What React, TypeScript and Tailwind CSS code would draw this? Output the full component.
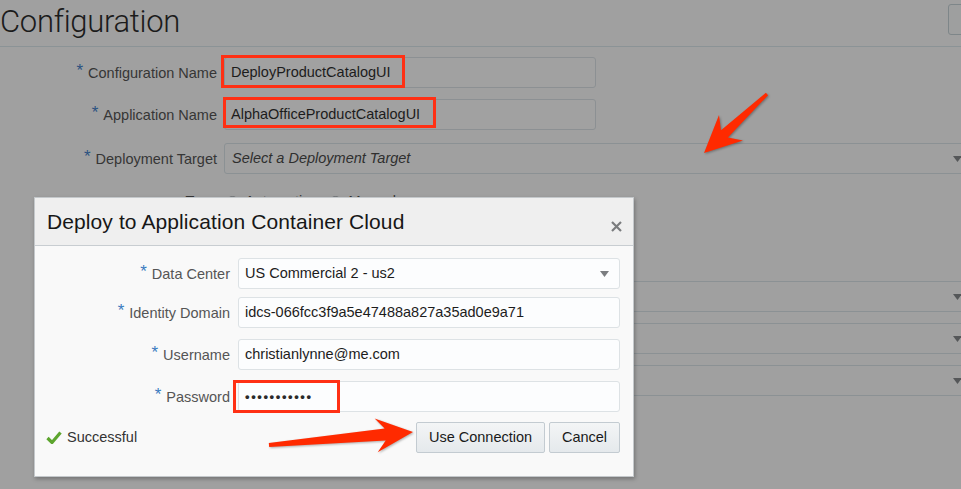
import React from "react";

type P = [number, number];

function arrowPoints(
  tail: P,
  tip: P,
  headLen: number,
  headHalf: number,
  tailHalf: number,
  neckHalf: number,
  notch: number
): string {
  const dx = tip[0] - tail[0];
  const dy = tip[1] - tail[1];
  const len = Math.hypot(dx, dy);
  const ux = dx / len;
  const uy = dy / len;
  const px = -uy;
  const py = ux;
  const neckC: P = [tip[0] - ux * (headLen - notch), tip[1] - uy * (headLen - notch)];
  const barbC: P = [tip[0] - ux * headLen, tip[1] - uy * headLen];
  const pts: P[] = [
    [tail[0] + px * tailHalf, tail[1] + py * tailHalf],
    [neckC[0] + px * neckHalf, neckC[1] + py * neckHalf],
    [barbC[0] + px * headHalf, barbC[1] + py * headHalf],
    tip,
    [barbC[0] - px * headHalf, barbC[1] - py * headHalf],
    [neckC[0] - px * neckHalf, neckC[1] - py * neckHalf],
    [tail[0] - px * tailHalf, tail[1] - py * tailHalf],
  ];
  return pts.map((p) => `${p[0].toFixed(1)},${p[1].toFixed(1)}`).join(" ");
}

function BgLabel({ text, w = "w-[218px]" }: { text: string; w?: string }) {
  return (
    <div className={`${w} shrink-0 flex items-center justify-end pr-[1px] pt-[2px]`}>
      <span className="text-[17px] leading-none text-[#2b5280] mr-[5px] mb-[7px]">*</span>
      <span className="text-[14.5px] text-[#363636]">{text}</span>
    </div>
  );
}

function BgArrow() {
  return (
    <svg width="9" height="6" viewBox="0 0 9 6" className="shrink-0">
      <path d="M0 0 H9 L4.5 6 Z" fill="#555759" />
    </svg>
  );
}

function BgSelect({ placeholder }: { placeholder?: string }) {
  return (
    <div className="flex-1 -mr-[14px] h-full flex items-center justify-between pl-[7px] pr-[12px] border border-[#8b9194] rounded-l-[3px] bg-[#a0a0a0]">
      <span className="text-[14.5px] italic text-[#2f2f2f]">{placeholder ?? ""}</span>
      <BgArrow />
    </div>
  );
}

function DlgLabel({ text }: { text: string }) {
  return (
    <div className="w-[195px] shrink-0 flex items-center justify-end pt-[2px]">
      <span className="text-[17px] leading-none text-[#3a7bc0] mr-[5px] mb-[7px]">*</span>
      <span className="text-[14.5px] text-[#555555]">{text}</span>
    </div>
  );
}

function DlgInput({ children, arrow }: { children: React.ReactNode; arrow?: boolean }) {
  return (
    <div className="ml-[8px] flex-1 h-full flex items-center justify-between pl-[6px] pr-[10px] border border-[#dde2e5] rounded-[3px] bg-[#fcfdfe]">
      <span className="text-[14.5px] text-[#1c1c1c] whitespace-nowrap">{children}</span>
      {arrow && (
        <svg width="9" height="6" viewBox="0 0 9 6">
          <path d="M0 0 H9 L4.5 6 Z" fill="#7b7d80" />
        </svg>
      )}
    </div>
  );
}

export default function App() {
  const topArrow = arrowPoints([767, 94], [704, 153], 37, 17.5, 1.6, 5, 9);
  const bottomArrow = arrowPoints([269, 445], [413, 432], 37, 17, 2, 6, 9);

  return (
    <div className="relative w-[961px] h-[489px] overflow-hidden bg-[#a0a0a0] font-['Liberation_Sans',Arial,sans-serif]">
      {/* Page header */}
      <div className="h-[47px] flex items-start justify-between border-b border-[#8b9396]">
        <h1 className="font-['Roboto',sans-serif] font-light text-[31px] leading-none pt-[6px] text-[#1b1b1b] tracking-[-0.3px]">
          Configuration
        </h1>
        <div className="mt-[4px] -mr-[10px] w-[23px] h-[31px] border border-[#7e8689] rounded-[3px] bg-[#9e9f9f]" />
      </div>

      {/* Background form */}
      <div className="flex flex-col pt-[10px]">
        <div className="flex items-center h-[31px]">
          <BgLabel text="Configuration Name" />
          <div className="ml-[6px] w-[372px] h-full flex items-center pl-[6px] border border-[#8c9093] rounded-[3px] bg-[#a1a1a1]">
            <span className="text-[14.5px] text-[#1c1c1c]">DeployProductCatalogUI</span>
          </div>
        </div>
        <div className="flex items-center h-[31px] mt-[11px]">
          <BgLabel text="Application Name" />
          <div className="ml-[6px] w-[372px] h-full flex items-center pl-[6px] border border-[#8c9093] rounded-[3px] bg-[#a1a1a1]">
            <span className="text-[14.5px] text-[#1c1c1c]">AlphaOfficeProductCatalogUI</span>
          </div>
        </div>
        <div className="flex items-center h-[31px] mt-[13px]">
          <BgLabel text="Deployment Target" />
          <div className="ml-[6px] flex-1 h-full flex">
            <BgSelect placeholder="Select a Deployment Target" />
          </div>
        </div>
        <div className="flex items-center h-[28px] mt-[14px]">
          <div className="w-[218px] shrink-0 flex justify-end pr-[1px]">
            <span className="text-[14.5px] text-[#363636]">Type</span>
          </div>
          <div className="ml-[8px] flex items-center gap-[6px]">
            <span className="w-[13px] h-[13px] rounded-full border border-[#6f7376] bg-[#a6a6a6]" />
            <span className="text-[14.5px] text-[#363636]">Automatic</span>
            <span className="ml-[14px] w-[13px] h-[13px] rounded-full border border-[#6f7376] bg-[#a6a6a6]" />
            <span className="text-[14.5px] text-[#363636]">Manual</span>
          </div>
        </div>
        <div className="flex items-center h-[31px] mt-[65px]">
          <div className="w-[218px] shrink-0" />
          <div className="ml-[6px] flex-1 h-full flex">
            <BgSelect />
          </div>
        </div>
        <div className="flex items-center h-[31px] mt-[11px]">
          <div className="w-[218px] shrink-0" />
          <div className="ml-[6px] flex-1 h-full flex">
            <BgSelect />
          </div>
        </div>
        <div className="flex items-center h-[31px] mt-[11px]">
          <div className="w-[218px] shrink-0" />
          <div className="ml-[6px] flex-1 h-full flex">
            <BgSelect />
          </div>
        </div>
      </div>

      {/* Dialog */}
      <div className="absolute left-[34px] top-[197px] w-[600px] h-[280px] flex flex-col border border-[#c4c8cb] bg-[#f9f9f9] shadow-[1px_2px_4px_rgba(0,0,0,0.28)]">
        <div className="h-[48px] shrink-0 flex items-center justify-between pl-[12px] pr-[11px] bg-[#efefef] border-b border-[#c8cdd1]">
          <span className="text-[21px] text-[#171717] tracking-[0.1px] pt-[1px]">Deploy to Application Container Cloud</span>
          <svg width="11" height="11" viewBox="0 0 11 11" className="mt-[10px]">
            <path d="M1 1 L10 10 M10 1 L1 10" stroke="#7a7c7e" strokeWidth="2.2" />
          </svg>
        </div>
        <div className="flex flex-col pt-[12px] pr-[13px]">
          <div className="flex items-center h-[31px]">
            <DlgLabel text="Data Center" />
            <DlgInput arrow>US Commercial 2 - us2</DlgInput>
          </div>
          <div className="flex items-center h-[31px] mt-[8px]">
            <DlgLabel text="Identity Domain" />
            <DlgInput>idcs-066fcc3f9a5e47488a827a35ad0e9a71</DlgInput>
          </div>
          <div className="flex items-center h-[31px] mt-[11px]">
            <DlgLabel text="Username" />
            <DlgInput>christianlynne@me.com</DlgInput>
          </div>
          <div className="flex items-center h-[31px] mt-[11px]">
            <DlgLabel text="Password" />
            <DlgInput>
              <span className="text-[13px] tracking-[1.6px] font-bold text-[#2a2a2a]">•••••••••••</span>
            </DlgInput>
          </div>
          <div className="flex items-center justify-between h-[31px] mt-[10px] pl-[11px]">
            <div className="flex items-center gap-[5px]">
              <svg width="16" height="13" viewBox="0 0 16 13">
                <path d="M1.5 7 L6 11.5 L14.5 1.5" fill="none" stroke="#5da52e" strokeWidth="3.2" strokeLinejoin="miter" />
              </svg>
              <span className="text-[14.5px] text-[#333333]">Successful</span>
            </div>
            <div className="flex items-center gap-[4px] h-full">
              <div className="w-[129px] h-full flex items-center justify-center border border-[#c3cbd1] rounded-[2px] bg-gradient-to-b from-[#f3f5f6] to-[#e5e9ec] text-[14.5px] text-[#1a1a1a] pt-[1px]">
                Use Connection
              </div>
              <div className="w-[71px] h-full flex items-center justify-center border border-[#c3cbd1] rounded-[2px] bg-gradient-to-b from-[#f3f5f6] to-[#e5e9ec] text-[14.5px] text-[#1a1a1a] pt-[1px]">
                Cancel
              </div>
            </div>
          </div>
        </div>
      </div>

      {/* Annotation boxes */}
      <div className="absolute left-[221px] top-[55px] w-[184px] h-[33px] border-[3px] border-[#ff3014]" />
      <div className="absolute left-[223px] top-[97px] w-[213px] h-[31px] border-[3px] border-[#ff3014]" />
      <div className="absolute left-[233px] top-[380px] w-[107px] h-[33px] border-[3px] border-[#ff3014]" />

      {/* Annotation arrows */}
      <svg
        className="absolute left-0 top-0 pointer-events-none drop-shadow-[1px_1px_1px_rgba(0,0,0,0.3)]"
        width="961"
        height="489"
        viewBox="0 0 961 489"
      >
        <polygon points={topArrow} fill="#ff2a00" strokeLinejoin="round" />
        <polygon points={bottomArrow} fill="#ff2a00" strokeLinejoin="round" />
      </svg>
    </div>
  );
}
